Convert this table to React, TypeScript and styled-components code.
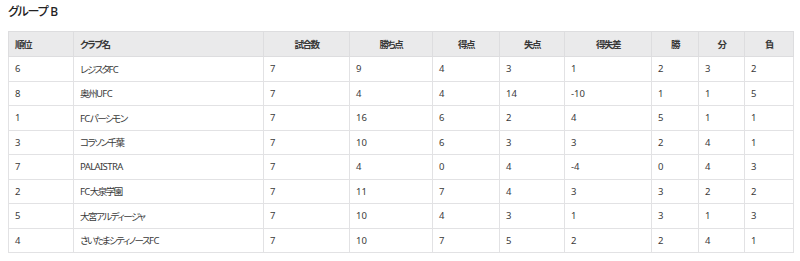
import React from "react";
import styled, { createGlobalStyle } from "styled-components";

const GlobalStyle = createGlobalStyle`
    body {
        margin: 0;
        background: #ffffff;
        font-family: "Noto Sans", "Noto Sans CJK JP", sans-serif;
        color: #333333;
    }
`;

const Page = styled.div`
    padding: 2px 8px 0 8px;
`;

const Title = styled.h3`
    margin: 0 0 10px 0;
    font-size: 12px;
    font-weight: 500;
    line-height: 19px;
    color: #222222;
    font-feature-settings: "palt";
    letter-spacing: -1.2px;
    word-spacing: 1px;
`;

const Table = styled.table`
    width: 785px;
    border-collapse: collapse;
    table-layout: fixed;
    font-size: 9.5px;
`;

const HeadCell = styled.th<{ $align?: string; $w: number }>`
    box-sizing: border-box;
    width: ${(p) => p.$w}px;
    height: 25px;
    padding: 0 6px;
    background: #eaeaeb;
    border: 1px solid #dddddf;
    text-align: ${(p) => p.$align || "center"};
    font-weight: 700;
    color: #383838;
    font-size: 9.5px;
    font-feature-settings: "palt";
    letter-spacing: -1.5px;
`;

const Row = styled.tr``;

const Cell = styled.td`
    box-sizing: border-box;
    height: 24.5px;
    padding: 0 6px;
    border: 1px solid #e2e2e4;
    color: #3a3a3a;
    white-space: nowrap;
    font-feature-settings: "palt";
`;

const Run = styled.span<{ $cjk: boolean }>`
    letter-spacing: ${(p) => (p.$cjk ? "-1.5px" : "-0.6px")};
`;

const columns = [
    { label: "順位", w: 65, align: "left" },
    { label: "クラブ名", w: 190, align: "left" },
    { label: "試合数", w: 86 },
    { label: "勝ち点", w: 83 },
    { label: "得点", w: 67 },
    { label: "失点", w: 65 },
    { label: "得失差", w: 87 },
    { label: "勝", w: 47 },
    { label: "分", w: 46 },
    { label: "負", w: 49 },
];

const rows: (string | number)[][] = [
    [6, "レジスタFC", 7, 9, 4, 3, 1, 2, 3, 2],
    [8, "奥州UFC", 7, 4, 4, 14, -10, 1, 1, 5],
    [1, "FCパーシモン", 7, 16, 6, 2, 4, 5, 1, 1],
    [3, "コラソン千葉", 7, 10, 6, 3, 3, 2, 4, 1],
    [7, "PALAISTRA", 7, 4, 0, 4, -4, 0, 4, 3],
    [2, "FC大泉学園", 7, 11, 7, 4, 3, 3, 2, 2],
    [5, "大宮アルディージャ", 7, 10, 4, 3, 1, 3, 1, 3],
    [4, "さいたまシティノースFC", 7, 10, 7, 5, 2, 2, 4, 1],
];

// split a club name into latin / japanese runs so each gets its own tracking
const ClubName = ({ name }: { name: string }) => {
    const parts = name.match(/[A-Za-z0-9 ]+|[^A-Za-z0-9 ]+/g) || [];
    return (
        <>
            {parts.map((p, i) => (
                <Run key={i} $cjk={!/^[A-Za-z0-9 ]+$/.test(p)}>
                    {p}
                </Run>
            ))}
        </>
    );
};

const App = () => {
    return (
        <Page>
            <GlobalStyle />
            <Title>グループ B</Title>
            <Table>
                <thead>
                    <tr>
                        {columns.map((c) => (
                            <HeadCell key={c.label} $w={c.w} $align={c.align}>
                                {c.label}
                            </HeadCell>
                        ))}
                    </tr>
                </thead>
                <tbody>
                    {rows.map((r) => (
                        <Row key={String(r[1])}>
                            {r.map((v, i) => (
                                <Cell key={i}>
                                    {i === 1 ? <ClubName name={String(v)} /> : v}
                                </Cell>
                            ))}
                        </Row>
                    ))}
                </tbody>
            </Table>
        </Page>
    );
};

export default App;
